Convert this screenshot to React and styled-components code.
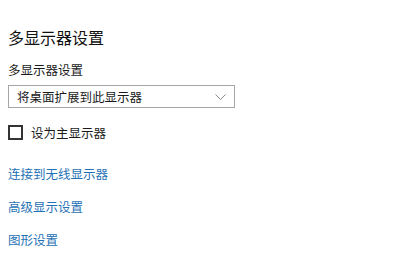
import React from "react";
import styled, { createGlobalStyle } from "styled-components";

const GlobalStyle = createGlobalStyle`
  body {
    margin: 0;
    background: #ffffff;
    font-family: "Noto Sans CJK SC", "Noto Sans", sans-serif;
  }
`;

const Page = styled.div`
  width: 420px;
  height: 264px;
  padding-left: 8px;
  box-sizing: border-box;
  display: flex;
  flex-direction: column;
  align-items: flex-start;
  overflow: hidden;
`;

const Title = styled.h1`
  margin: 27px 0 0;
  font-size: 16px;
  line-height: 20px;
  font-weight: 400;
  color: #111;
`;

const Label = styled.div`
  margin-top: 14px;
  font-size: 12.5px;
  line-height: 18px;
  color: #1a1a1a;
`;

const Select = styled.div`
  margin-top: 6px;
  width: 227px;
  height: 23px;
  box-sizing: border-box;
  border: 1.5px solid #a6a6a6;
  display: flex;
  align-items: center;
  justify-content: space-between;
  padding: 0 8px 0 8px;
  font-size: 12.5px;
  color: #1a1a1a;
`;

const Check = styled.label`
  margin-top: 17px;
  display: flex;
  align-items: center;
  gap: 8px;
  font-size: 12.5px;
  line-height: 15px;
  color: #1a1a1a;
`;

const Box = styled.span`
  width: 15px;
  height: 15px;
  box-sizing: border-box;
  border: 2px solid #333;
`;

const Link = styled.a`
  margin-top: ${(p) => p.gap}px;
  font-size: 12.5px;
  line-height: 18px;
  color: #1f72b5;
  text-decoration: none;
`;

export default function App() {
  return (
    <>
      <GlobalStyle />
      <Page>
        <Title>多显示器设置</Title>
        <Label>多显示器设置</Label>
        <Select>
          <span>将桌面扩展到此显示器</span>
          <svg width="11" height="6" viewBox="0 0 11 6">
            <path d="M0.5 0.5 L5.5 5.5 L10.5 0.5" fill="none" stroke="#8a8a8a" strokeWidth="1" />
          </svg>
        </Select>
        <Check>
          <Box />
          设为主显示器
        </Check>
        <Link gap={25}>连接到无线显示器</Link>
        <Link gap={15}>高级显示设置</Link>
        <Link gap={15}>图形设置</Link>
      </Page>
    </>
  );
}
